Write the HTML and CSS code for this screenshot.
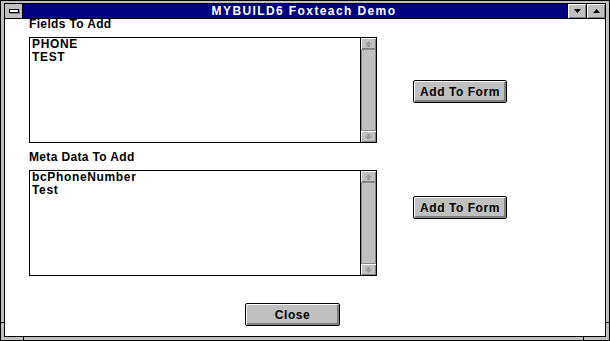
FILE: index.html
```html
<!DOCTYPE html>
<html>
<head>
<meta charset="utf-8">
<link rel="stylesheet" href="styles.css">
</head>
<body>
<div class="window">
  <span class="tick tick-l"></span>
  <span class="tick tick-r"></span>
  <span class="tick tick-bl"></span>
  <span class="tick tick-br"></span>
  <div class="frame">
    <div class="titlebar">
      <div class="sysmenu"><span class="sysbar"></span></div>
      <div class="title">MYBUILD6 Foxteach Demo</div>
      <div class="tbtn">
        <svg width="7" height="4" viewBox="0 0 7 4"><path d="M0 0H7L3.5 4Z" fill="#000"/></svg>
      </div>
      <div class="tbtn">
        <svg width="7" height="4" viewBox="0 0 7 4"><path d="M0 4H7L3.5 0Z" fill="#000"/></svg>
      </div>
    </div>
    <div class="client">
      <div class="section">
        <div class="col">
          <div class="label">Fields To Add</div>
          <div class="listbox">
            <div class="items">
              <div class="item">PHONE</div>
              <div class="item">TEST</div>
            </div>
            <div class="scrollbar">
              <div class="sbtn"><svg width="7" height="6" viewBox="0 0 7 6"><path d="M3.5 0L7 3.5H5V6H2V3.5H0Z" fill="#9a9a9a"/></svg></div>
              <div class="track"></div>
              <div class="sbtn"><svg width="7" height="6" viewBox="0 0 7 6"><path d="M3.5 6L7 2.5H5V0H2V2.5H0Z" fill="#9a9a9a"/></svg></div>
            </div>
          </div>
        </div>
        <button class="btn btn-add btn-first">Add To Form</button>
      </div>
      <div class="section section-second">
        <div class="col">
          <div class="label">Meta Data To Add</div>
          <div class="listbox">
            <div class="items">
              <div class="item">bcPhoneNumber</div>
              <div class="item">Test</div>
            </div>
            <div class="scrollbar">
              <div class="sbtn"><svg width="7" height="6" viewBox="0 0 7 6"><path d="M3.5 0L7 3.5H5V6H2V3.5H0Z" fill="#9a9a9a"/></svg></div>
              <div class="track"></div>
              <div class="sbtn"><svg width="7" height="6" viewBox="0 0 7 6"><path d="M3.5 6L7 2.5H5V0H2V2.5H0Z" fill="#9a9a9a"/></svg></div>
            </div>
          </div>
        </div>
        <button class="btn btn-add btn-second">Add To Form</button>
      </div>
      <button class="btn btn-close">Close</button>
    </div>
  </div>
</div>
</body>
</html>
```

FILE: styles.css
```css
* { box-sizing: border-box; }
html, body { margin: 0; padding: 0; background: #fff; }
body { font-family: "Liberation Sans", Arial, sans-serif; font-weight: bold; font-size: 12px; color: #000; }

.window {
  position: relative;
  width: 610px;
  height: 341px;
  border: 1px solid #000;
  padding: 2px 3px 3px 3px;
  background: #c0c0c0;
}
.tick { position: absolute; background: #000; }
.tick-l { left: 0; top: 321px; width: 4px; height: 1px; }
.tick-r { right: 0; top: 321px; width: 4px; height: 1px; }
.tick-bl { left: 22px; bottom: 0; width: 1px; height: 4px; }
.tick-br { right: 25px; bottom: 0; width: 1px; height: 4px; }

.frame {
  height: 100%;
  border: 1px solid #000;
  display: flex;
  flex-direction: column;
  background: #fff;
}

.titlebar {
  height: 15px;
  flex: none;
  display: flex;
  background: #000080;
  border-bottom: 1px solid #000;
}
.sysmenu {
  width: 18px;
  background: #c0c0c0;
  border-right: 1px solid #000;
  display: flex;
  align-items: center;
  justify-content: center;
}
.sysbar {
  width: 10px;
  height: 4px;
  background: #fff;
  border: 1px solid #000;
  box-shadow: 1px 1px 0 #808080;
}
.title {
  flex: 1;
  color: #fff;
  text-align: center;
  line-height: 14px;
  padding-left: 18px;
  letter-spacing: 1.4px;
  white-space: nowrap;
}
.tbtn {
  width: 19px;
  background: #c0c0c0;
  border-left: 1px solid #000;
  box-shadow: inset 1px 1px 0 #fff, inset -1px -1px 0 #808080;
  display: flex;
  align-items: center;
  justify-content: center;
}
.tbtn svg { display: block; }

.client {
  flex: 1;
  background: #fff;
  padding-left: 24px;
  display: flex;
  flex-direction: column;
  align-items: flex-start;
}

.section { display: flex; gap: 36px; align-items: flex-start; }
.section-second { margin-top: 9px; }
.col { width: 348px; }

.label { line-height: 11px; margin-bottom: 7px; white-space: nowrap; letter-spacing: 0.35px; }

.listbox {
  height: 106px;
  border: 1px solid #000;
  display: flex;
  background: #fff;
}
.items { flex: 1; padding: 0 2px; }
.item { line-height: 13px; white-space: nowrap; letter-spacing: 0.65px; }

.scrollbar {
  width: 16px;
  border-left: 1px solid #000;
  background: #c0c0c0;
  display: flex;
  flex-direction: column;
}
.sbtn {
  height: 11px;
  flex: none;
  background: #c0c0c0;
  box-shadow: inset 1px 1px 0 #fff, inset -1px -1px 0 #808080;
  display: flex;
  align-items: center;
  justify-content: center;
}
.sbtn svg { display: block; }
.track {
  flex: 1;
  border: 1px solid #8a8a8a;
  background: #c0c0c0;
}

.btn {
  font-family: "Liberation Sans", Arial, sans-serif;
  font-weight: bold;
  font-size: 12px;
  letter-spacing: 0.55px;
  color: #000;
  height: 23px;
  padding: 0;
  border: 1px solid #000;
  border-radius: 2px;
  background: #c0c0c0;
  box-shadow: inset 1px 1px 0 #fff, inset -2px -2px 0 #808080;
  line-height: 20px;
}
.btn-add { width: 94px; }
.btn-first { margin-top: 61px; }
.btn-second { margin-top: 44px; }
.btn-close { width: 95px; margin-top: 27px; margin-left: 216px; }
```
